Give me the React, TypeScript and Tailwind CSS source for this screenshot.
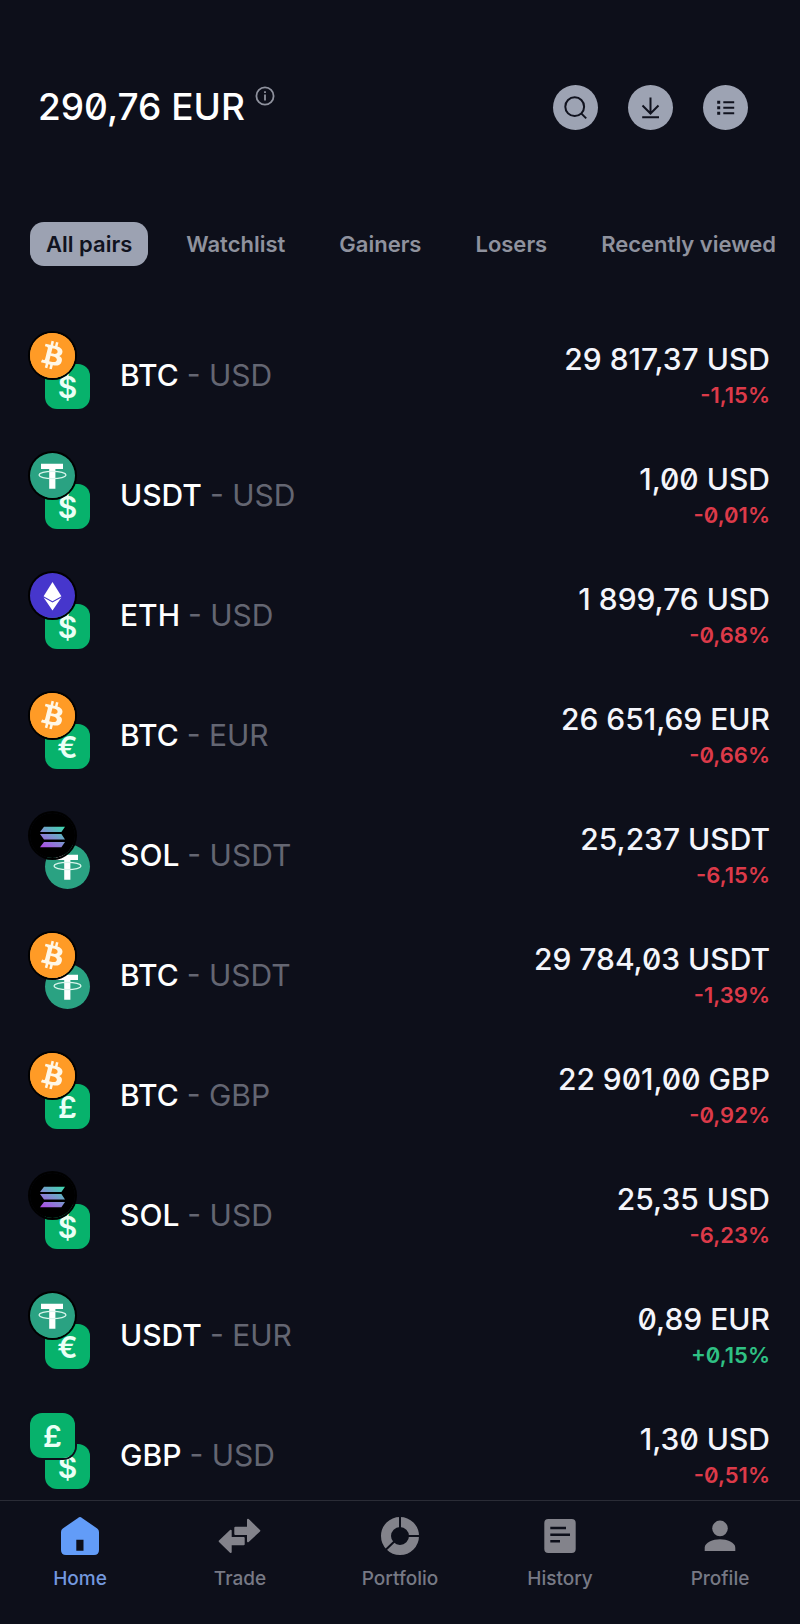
import type { ReactNode } from 'react';
import { SiBitcoin } from 'react-icons/si';

type Currency = 'BTC' | 'USDT' | 'ETH' | 'SOL' | 'USD' | 'EUR' | 'GBP';

interface Pair {
  base: Currency;
  quote: Currency;
  price: string;
  change: string;
}

const pairs: Pair[] = [
  { base: 'BTC', quote: 'USD', price: '29 817,37', change: '-1,15%' },
  { base: 'USDT', quote: 'USD', price: '1,00', change: '-0,01%' },
  { base: 'ETH', quote: 'USD', price: '1 899,76', change: '-0,68%' },
  { base: 'BTC', quote: 'EUR', price: '26 651,69', change: '-0,66%' },
  { base: 'SOL', quote: 'USDT', price: '25,237', change: '-6,15%' },
  { base: 'BTC', quote: 'USDT', price: '29 784,03', change: '-1,39%' },
  { base: 'BTC', quote: 'GBP', price: '22 901,00', change: '-0,92%' },
  { base: 'SOL', quote: 'USD', price: '25,35', change: '-6,23%' },
  { base: 'USDT', quote: 'EUR', price: '0,89', change: '+0,15%' },
  { base: 'GBP', quote: 'USD', price: '1,30', change: '-0,51%' },
];

const tabs = ['All pairs', 'Watchlist', 'Gainers', 'Losers', 'Recently viewed'];

const fiatSigns: Partial<Record<Currency, string>> = { USD: '$', EUR: '€', GBP: '£' };

const CurrencyIcon = ({ currency }: { currency: Currency }) => {
  if (currency === 'BTC') {
    return (
      <span className="block size-full rounded-full bg-[radial-gradient(circle_closest-side,#fff7e6_80%,#ff9b26_82%)]">
        <SiBitcoin className="size-full text-[#ff9b26]" />
      </span>
    );
  }

  if (currency === 'USDT') {
    return (
      <svg viewBox="0 0 45 45" className="size-full rounded-full bg-[#2aa282]" aria-hidden="true">
        <path d="M11 10.7h22v5.3h-7.6v19.7h-6.2V16H11z" fill="#fff" />
        <ellipse cx="22.5" cy="22" rx="13.4" ry="3.6" fill="none" stroke="#d9f5ec" strokeWidth="1.2" />
      </svg>
    );
  }

  if (currency === 'ETH') {
    return (
      <svg viewBox="0 0 45 45" className="size-full rounded-full bg-[#4636cc]" aria-hidden="true">
        <path d="M22.5 9l8.9 14.3-8.9 5-8.9-5z" fill="#fff" />
        <path d="M13.6 24.4l8.9 5 8.9-5-8.9 13z" fill="#fff" />
      </svg>
    );
  }

  if (currency === 'SOL') {
    return (
      <svg viewBox="0 0 45 45" className="size-full rounded-full bg-black" aria-hidden="true">
        <defs>
          <linearGradient id="sol" gradientUnits="userSpaceOnUse" x1="30" y1="12" x2="15" y2="37">
            <stop offset="0" stopColor="#3fd9b0" />
            <stop offset="0.5" stopColor="#8090d0" />
            <stop offset="1" stopColor="#b048e8" />
          </linearGradient>
        </defs>
        <path
          d="M14 13.7h21l-3.6 5.3H10zM10 21.1h21.4l3.6 5.3H14zM14 29h21l-3.6 5.3H10z"
          fill="url(#sol)"
        />
      </svg>
    );
  }

  return (
    <span className="flex size-full items-center justify-center rounded-xl bg-[#07b26c] text-[30px] leading-none font-semibold text-[#eafff5]">
      {fiatSigns[currency]}
    </span>
  );
};

const PairIcon = ({ base, quote }: { base: Currency; quote: Currency }) => (
  <div className="relative mb-2 h-[76px] w-[60px] shrink-0">
    <div className="absolute right-0 bottom-0 size-[45px]">
      <CurrencyIcon currency={quote} />
    </div>
    <div
      className={`absolute top-0 left-0 size-[45px] ring-2 ${
        base === 'GBP' ? 'rounded-xl ring-[#0d0f1a]' : 'rounded-full ring-black'
      }`}
    >
      <CurrencyIcon currency={base} />
    </div>
  </div>
);

const PairRow = ({ base, quote, price, change }: Pair) => (
  <li>
    <a href={`#${base}-${quote}`} className="flex h-[120px] items-center">
      <PairIcon base={base} quote={quote} />
      <span className="ml-[30px] text-[30px] leading-10 font-medium text-white">
        {base} <span className="font-normal text-[#646672]">- {quote}</span>
      </span>
      <span className="ml-auto flex flex-col items-end">
        <span className="text-[30px] leading-10 font-medium text-[#f4f5fb]">
          {price} {quote}
        </span>
        <span
          className={`text-[22px] leading-8 font-semibold ${
            change.startsWith('+') ? 'text-[#2fc184]' : 'text-[#dc3a49]'
          }`}
        >
          {change}
        </span>
      </span>
    </a>
  </li>
);

const RoundButton = ({ label, children }: { label: string; children: ReactNode }) => (
  <button
    type="button"
    aria-label={label}
    className="size-[45px] cursor-pointer rounded-full bg-[#9da3b3] text-[#11131f]"
  >
    <svg viewBox="0 0 45 45" className="size-full" fill="none" stroke="currentColor" strokeWidth="2">
      {children}
    </svg>
  </button>
);

const Header = () => (
  <header className="flex items-center justify-between pt-[84px] pr-[52px] pl-[38px]">
    <div className="flex items-center gap-[10px]">
      <h1 className="text-[37px] leading-[46px] font-medium text-white">290,76 EUR</h1>
      <button type="button" aria-label="Balance info" className="mb-[22px] cursor-pointer">
        <svg viewBox="0 0 20 20" className="size-5 text-[#8f929e]" fill="none" stroke="currentColor">
          <circle cx="10" cy="10" r="8.6" strokeWidth="1.8" />
          <path d="M10 5.2v1.9M10 8.6v5.8" strokeWidth="1.8" />
        </svg>
      </button>
    </div>

    <div className="flex gap-[30px]">
      <RoundButton label="Search">
        <circle cx="21.7" cy="21.7" r="9.4" />
        <path d="M28.2 28.4l5 5" />
      </RoundButton>
      <RoundButton label="Deposit">
        <path d="M22.5 12.5v16M14.5 20.5l8 8 8-8M14.2 32.3h16.8" />
      </RoundButton>
      <RoundButton label="Menu">
        <path d="M20.3 17.2h10.9M20.3 22.7h10.9M20.3 28.3h10.9" />
        <path d="M14.2 17.2h3M14.2 22.7h3M14.2 28.3h3" strokeWidth="3" />
      </RoundButton>
    </div>
  </header>
);

const Tabs = () => (
  <div role="tablist" className="mt-[92px] flex gap-[22px] overflow-hidden pl-[30px]">
    {tabs.map((tab, i) => (
      <button
        key={tab}
        type="button"
        role="tab"
        aria-selected={i === 0}
        className={`h-11 shrink-0 cursor-pointer rounded-[14px] px-4 text-[22px] font-semibold ${
          i === 0 ? 'bg-[#9ca2b2] text-[#11131f]' : 'text-[#8f929e]'
        }`}
      >
        {tab}
      </button>
    ))}
  </div>
);

const navItems: { label: string; icon: ReactNode }[] = [
  {
    label: 'Home',
    icon: (
      <path
        fillRule="evenodd"
        d="M18 1.9q2-1.6 4 0l15.2 10.6q1.8 1.3 1.8 3.5v18q0 5-5 5H6q-5 0-5-5V16q0-2.2 1.8-3.5zM16.3 23.7v11h7.2v-11z"
      />
    ),
  },
  {
    label: 'Trade',
    icon: (
      <path
        stroke="currentColor"
        strokeWidth="2"
        strokeLinejoin="round"
        d="M15.3 11.7H28v-8L39.3 14.7 28 25.3v-7.3H15.3zM23.7 22v6.3H10.7V36L-.3 25.3l11-10.6V22z"
      />
    ),
  },
  {
    label: 'Portfolio',
    icon: (
      <>
        <circle cx="20" cy="20" r="14" fill="none" stroke="currentColor" strokeWidth="10" />
        <path d="M20 20V0M20 20h20M20 20L5.5 34" stroke="#0d0f1a" strokeWidth="2" />
      </>
    ),
  },
  {
    label: 'History',
    icon: (
      <>
        <rect x="4.3" y="3" width="31.4" height="34" rx="4" />
        <path
          d="M10.3 12H26M10.3 18.7H30M10.3 25.3H20"
          stroke="#0d0f1a"
          strokeWidth="2.4"
        />
      </>
    ),
  },
  {
    label: 'Profile',
    icon: (
      <>
        <circle cx="20" cy="12.4" r="7.8" />
        <path d="M4.7 35v-3.2c0-5.4 8.3-8.5 15.3-8.5s15.3 3.1 15.3 8.5V35z" />
      </>
    ),
  },
];

const BottomNav = () => (
  <nav className="flex shrink-0 border-t border-[#2a2c36] pt-[15px] pb-[33px]">
    {navItems.map(({ label, icon }, i) => (
      <a
        key={label}
        href={`#${label.toLowerCase()}`}
        className={`flex flex-1 flex-col items-center gap-[11px] ${
          i === 0 ? 'text-[#629cf8]' : 'text-[#83838b]'
        }`}
      >
        <svg viewBox="0 0 40 40" className="size-10 overflow-visible" fill="currentColor" aria-hidden="true">
          {icon}
        </svg>
        <span className={`text-[19px] leading-6 font-medium ${i === 0 ? 'text-[#7398df]' : 'text-[#777985]'}`}>
          {label}
        </span>
      </a>
    ))}
  </nav>
);

export default function App() {
  return (
    <div className="flex h-screen flex-col bg-[#0d0f1a] font-['Inter',sans-serif] slashed-zero">
      <main className="min-h-0 flex-1 overflow-y-auto [scrollbar-width:none]">
        <Header />
        <Tabs />
        <ul className="mt-[49px] pr-[30px] pl-[30px]">
          {pairs.map((pair) => (
            <PairRow key={`${pair.base}-${pair.quote}`} {...pair} />
          ))}
        </ul>
      </main>
      <BottomNav />
    </div>
  );
}
